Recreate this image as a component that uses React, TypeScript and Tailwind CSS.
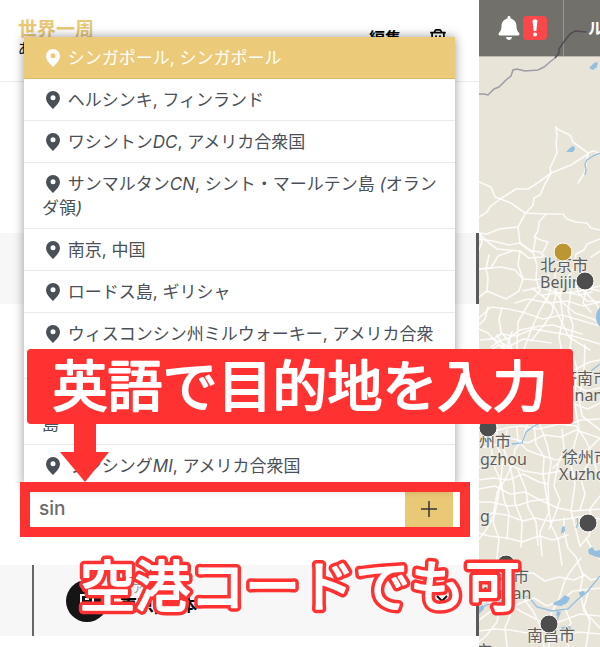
import React from "react";
import { FaBell, FaRegTrashAlt } from "react-icons/fa";

const destinations = [
  [{ text: "シンガポール, シンガポール" }],
  [{ text: "ヘルシンキ, フィンランド" }],
  [{ text: "ワシントン" }, { text: "DC", latin: true }, { text: ", アメリカ合衆国" }],
  [
    { text: "サンマルタン" },
    { text: "CN", latin: true },
    { text: ", シント・マールテン島 " },
    { text: "(", latin: true },
    { text: "オラン\nダ領" },
    { text: ")", latin: true },
  ],
  [{ text: "南京, 中国" }],
  [{ text: "ロードス島, ギリシャ" }],
  [{ text: "ウィスコンシン州ミルウォーキー, アメリカ合衆\n国" }],
  [{ text: "シンプソンベイ, シント・マールテン\n島" }],
  [{ text: "ランシング" }, { text: "MI", latin: true }, { text: ", アメリカ合衆国" }],
];

const roads = [
  "M77 127L78 136 77 143 78 153 71 168 72 173 66 184 61 195 55 198 54 205 46 214 39 227 41 243 53 252",
  "M77 127L80 130 91 135 94 142 109 153 114 151 121 153",
  "M109 154L92 165 72 173 60 182 49 189 37 189 31 193 21 199 11 207 8 212 0 217",
  "M0 182L12 187 16 197 32 203 46 213 67 214 84 214 88 219 97 222 108 223 112 228 121 230",
  "M109 154L107 165 106 172 99 183",
  "M67 214L60 222 59 231 55 237 62 240 69 242 64 252",
  "M39 227L20 229 8 234 0 233",
  "M0 239L14 241 30 245 41 243 52 251 61 252 70 261 84 263",
  "M0 233L10 243 18 249 41 251 50 258 64 257",
  "M0 232L3 242 0 250M0 269L12 268 19 256 33 251",
  "M41 251L39 265 44 279 40 291 27 299 8 291 0 297",
  "M10 255L7 269 9 277 8 292M0 269L22 267 36 270 44 279 58 280 70 275",
  "M57 237L54 252 58 265 57 279 61 291 50 303 39 322 38 349",
  "M121 239L108 244 105 250 97 254 95 268 86 282M121 251L112 257",
  "M44 291L61 287 78 293 96 292 121 286M36 303L49 299 70 303 88 301 104 306 121 302",
  "M0 318L12 307 29 309 43 312 64 319 83 315 121 326",
  "M23 308L20 319 22 332 31 343 36 362M9 307L6 319 0 325",
  "M73 281L70 295 61 310 52 330 45 349M84 281L81 297 84 318 80 337 85 363",
  "M76 274L77 294 73 313 65 325 52 341M92 290L89 310 94 325 91 349",
  "M66 282L75 288 83 302 96 313 114 319 121 323M53 288L66 298 76 308 90 337 111 350",
  "M61 287L71 283 89 285 103 287 121 291M64 295L85 292 100 295 113 292",
  "M96 283L100 294 108 301 121 302M101 275L105 291 117 303 121 311M108 286L104 303 112 312",
  "M0 340L14 339 22 334 37 336 54 329 78 333 94 336 121 344",
  "M12 347L20 341 30 338 41 330 61 326 74 325 103 334",
  "M0 329L9 333 18 343 28 353M5 355L18 346 31 346 44 339 72 343",
  "M33 332L29 344 27 356M18 335L26 349 36 350M12 338L25 344 42 355",
  "M92 348L98 369 95 400 100 428 91 460 96 484 92 511 101 546",
  "M106 345L105 371 100 398 103 416 121 430M95 370L111 362 121 360",
  "M94 384L107 391 121 388M95 404L109 409 121 403M88 425L102 420 121 419",
  "M0 440L13 432 31 427 43 426 60 429 80 424 97 426",
  "M55 424L57 444 65 457 64 474 68 499 72 525 79 539 83 565",
  "M61 425L68 444 72 462 69 484 70 512 61 532 63 556",
  "M38 427L39 441 48 450 61 455 77 460 94 456 121 463",
  "M48 425L44 440 36 449 34 463 27 478 18 493 14 517 7 530 0 539",
  "M0 447L12 447 31 438 49 443 65 435 82 437 97 430 121 438",
  "M0 467L17 463 28 464 45 471 64 474 83 471 96 474",
  "M8 425L12 444 14 463 22 482 25 500 30 513 28 539",
  "M18 427L18 446 24 459 22 478 19 498 14 522 20 539 17 565",
  "M28 430L25 450 32 470 35 486 36 503 43 521 42 547",
  "M0 480L14 478 29 480 44 474 60 482 69 484",
  "M0 489L16 486 31 494 46 492 61 500 79 508 94 511 121 509",
  "M0 519L13 513 28 515 44 521 56 518 70 521 88 519 105 516 121 519",
  "M0 502L12 502 29 506 40 505 52 501 68 499",
  "M0 533L10 536 28 538 43 542 60 536 74 540 89 535",
  "M39 470L47 490 49 507 57 522 59 545M79 464L75 486 81 500 76 515 70 529",
  "M93 456L110 449 121 438M97 426L106 439 113 453 118 472 121 481",
  "M83 429L85 448 80 462 74 468M105 450L110 463 101 476 106 494 101 510",
  "M101 546L110 536 113 522 111 509 121 496M107 538L114 551 121 559",
  "M85 518L85 532 89 548 97 557 104 575 101 592 105 611 121 628",
  "M102 558L94 568 86 580 80 599 72 614 70 647",
  "M103 573L112 580 121 578M106 575L95 580 80 577 66 581 54 573 37 574",
  "M0 573L8 580 20 588 29 603 43 612 61 621 80 622 101 614 121 616",
  "M30 575L36 592 33 611 26 628 28 647M13 590L21 604 18 622 7 636 0 642",
  "M0 620L12 611 29 609 44 602 55 598 68 606 83 600 94 591 121 588",
  "M0 631L16 629 31 630 48 633 62 630 81 637 99 632 121 634",
  "M44 598L54 611 61 625 65 647M86 608L92 623 84 636 90 647",
  "M109 593L105 607 111 622 107 647M0 604L8 601 18 606",
];

const markers = [
  { x: 84, y: 252, color: "#bd9634" },
  { x: 106, y: 281, color: "#4d4d4d" },
  { x: 9, y: 428, color: "#4d4d4d" },
  { x: 109, y: 523, color: "#4d4d4d" },
  { x: 27, y: 564, color: "#4d4d4d" },
  { x: 70, y: 624, color: "#4d4d4d" },
];

const labels = [
  { x: 61, y: 271, text: "北京市" },
  { x: 61, y: 288, text: "Beijin" },
  { x: -32, y: 342, text: "Taiyi" },
  { x: 82, y: 384, text: "济南市" },
  { x: 87, y: 401, text: "Jinan" },
  { x: -16, y: 447, text: "郑州市" },
  { x: -37, y: 465, text: "Zhengzhou" },
  { x: 83, y: 463, text: "徐州市" },
  { x: 80, y: 480, text: "Xuzhou" },
  { x: -57, y: 522, text: "Nanyang" },
  { x: 2, y: 582, text: "武汉市" },
  { x: -1, y: 599, text: "Wuhan" },
  { x: 48, y: 641, text: "南昌市" },
  { x: -35, y: 657, text: "长沙市" },
];

const PinIcon = () => (
  <svg viewBox="0 0 14 18" className="mr-[3px] ml-1 inline-block h-[18px] w-[14px] align-[-3px]">
    <path
      fill="currentColor"
      fillRule="evenodd"
      d="M7 0a7 7 0 0 0-7 7c0 4.4 4.5 8.300 7 11 2.500-2.700 7-6.600 7-11a7 7 0 0 0-7-7Zm0 4.200a2.500 2.500 0 1 1 0 5 2.500 2.500 0 0 1 0-5Z"
    />
  </svg>
);

const RouteMap = () => (
  <svg
    viewBox="0 0 121 647"
    preserveAspectRatio="xMinYMin slice"
    className="absolute inset-0 h-full w-full bg-[#e8e4d8]"
  >
    <g fill="none" stroke="#fff" strokeWidth="1.6" strokeLinejoin="round" strokeLinecap="round">
      {roads.map((road, index) => (
        <path key={index} d={road} strokeOpacity=".85" />
      ))}
    </g>
    <g fill="none" stroke="#94bfe0" strokeWidth="1.3">
      <path d="M121 153L114 156 108 160 106 164 107 170 106 175" />
      <path d="M33 444L43 443 47 432 55 426 61 423M112 371L121 364" />
      <path d="M0 611L7 605 18 603 35 595 50 597 58 607 73 611 89 609 98 600 108 592 121 576" />
      <path d="M98 518L99 524 97 528M86 529L84 533M79 613L79 618 76 623" />
    </g>
    <g fill="#94bfe0">
      <path d="M87 152L92 147 95 146 96 149 94 152ZM110 68L115 63 119 62 118 67 114 70Z" />
      <circle cx="131" cy="317" r="14" />
      <path d="M109 550L113 547 116 551 121 550V558L115 556 110 554ZM83 527L86 526 85 531 82 534Z" />
      <path d="M74 603L82 599 86 595 91 598 88 603 82 606 75 605ZM78 611L82 612 80 617 77 615ZM82 627L91 626 93 630 84 632Z" />
      <path d="M0 607L4 605 5 609 0 614ZM100 592L105 591 106 594 101 597Z" />
    </g>
    {labels.map((label) => (
      <text
        key={label.text}
        x={label.x}
        y={label.y}
        fontSize="16"
        fill="#5e5e5e"
        stroke="#efede5"
        strokeWidth="2"
        paintOrder="stroke"
        className="font-['Noto_Sans','Noto_Sans_CJK_SC',sans-serif]"
      >
        {label.text}
      </text>
    ))}
    {markers.map((marker, index) => (
      <circle
        key={index}
        cx={marker.x}
        cy={marker.y}
        r="9"
        fill={marker.color}
        stroke="#fff"
        strokeWidth="1"
      />
    ))}
  </svg>
);

const DestinationMenu = () => (
  <ul className="absolute bottom-full left-0 z-10 mb-[3px] w-full bg-white text-[17px] leading-6 text-[#495057] shadow-[0_0_10px_rgba(0,0,0,0.4)]">
    {destinations.map((parts, index) => (
      <li
        key={index}
        className={
          index === 0
            ? "border-b border-[#dfb966] bg-[#ebca7a] text-white"
            : "border-b border-[#e9e9e9]"
        }
      >
        <button
          type="button"
          className="block w-full pt-[9px] pr-2 pb-2 pl-[18px] text-left whitespace-pre"
        >
          <PinIcon />{" "}
          {parts.map((part, i) => (
            <span key={i} className={"latin" in part ? "italic" : ""}>
              {part.text}
            </span>
          ))}
        </button>
      </li>
    ))}
  </ul>
);

// Hand-lettered look: regular weight thickened with a round-joined stroke
const Lettering = ({ id, text, outline }: { id: string; text: string; outline?: string }) => (
  <svg
    viewBox="0 0 546 75"
    className="h-[75px] w-[546px] overflow-visible font-['Noto_Sans_CJK_JP',sans-serif]"
    strokeLinejoin="round"
    strokeLinecap="round"
    fill="#fff"
  >
    <defs>
      <text id={id} x="273" y="57" fontSize="55" fontWeight="400" textAnchor="middle">
        {text}
      </text>
    </defs>
    {outline && <use href={`#${id}`} stroke={outline} strokeWidth="9" />}
    <use href={`#${id}`} stroke="#fff" strokeWidth="2" />
  </svg>
);

const App: React.FC = () => {
  return (
    <div className="relative flex min-h-screen overflow-hidden bg-white font-['Inter','Noto_Sans_CJK_JP',sans-serif] text-black">
      <main className="w-[479px] flex-none">
        <header className="flex h-[82px] justify-between border-b border-[#ececec] pt-[18px] pr-8 pl-[18px]">
          <div>
            <h1 className="text-[19px] leading-6 font-bold text-[#e9c876]">世界一周</h1>
            <p className="text-sm leading-3">あと少し</p>
          </div>
          <div className="flex items-start gap-7 pt-2 font-bold">
            <button type="button">編集</button>
            <button type="button" aria-label="削除" className="pt-[3px]">
              <FaRegTrashAlt size={18} />
            </button>
          </div>
        </header>

        <div className="mt-[151px] h-[71px] border-r-[3px] border-[#5a5a5c] bg-[#f7f7f7]" />

        <form
          className="relative mt-[186px] mr-6 ml-6 flex h-[38px] bg-white"
          onSubmit={(e) => e.preventDefault()}
        >
          <DestinationMenu />
          <input
            type="text"
            aria-label="目的地"
            defaultValue="sin"
            className="min-w-0 flex-1 px-[15px] text-[19px] font-medium text-[#6c6c6c] outline-none"
          />
          <button
            type="button"
            aria-label="追加"
            className="mr-[2px] flex w-12 items-center justify-center bg-[#e9c876]"
          >
            <svg viewBox="0 0 16 16" className="h-4 w-4" stroke="#333" strokeWidth="1.5">
              <path d="M8 0V16M0 8H16" />
            </svg>
          </button>
        </form>

        <div className="mt-[37px] mb-[11px] flex h-[71px] border-r-[3px] border-[#5a5a5c] bg-[#f7f7f7]">
          <div className="ml-8 flex flex-1 items-center gap-3 border-l-2 border-[#666] pr-7 pl-8">
            <div className="flex h-[42px] w-[42px] items-center justify-center rounded-full bg-[#151515]">
              <svg viewBox="0 0 16 16" className="h-4 w-4" fill="none" stroke="#fff" strokeWidth="2">
                <path d="M2 15V2H14V15M6 6H10M6 10H10" />
              </svg>
            </div>
            <div className="flex-1 pb-1">
              <p className="text-xs leading-3 text-[#999]">エア</p>
              <p className="text-[17px] leading-5 font-bold">東京, 日本</p>
            </div>
            <svg viewBox="0 0 12 12" className="h-3 w-3" stroke="#111" strokeWidth="2">
              <path d="M1 1L11 11M1 11L11 1" />
            </svg>
          </div>
        </div>
      </main>

      <aside className="relative min-w-0 flex-1">
        <RouteMap />
        <nav className="relative flex h-[57px] overflow-hidden border-b border-[#bbb9b1] bg-[#71706a] text-white">
          <div className="flex w-[85px] flex-none items-center gap-[2px] border-r border-[#96958f] pl-[18px]">
            <FaBell size={24} className="flex-none" />
            <span className="flex h-6 w-6 flex-none items-center justify-center rounded-sm bg-[#fa474a]">
              <svg viewBox="0 0 6 18" className="h-[18px] w-[6px]" fill="#fff">
                <path d="M0.500 1.500Q3-1 5.500 1.500L4.300 12H1.700Z" />
                <circle cx="3" cy="15.500" r="2" />
              </svg>
            </span>
          </div>
          <a href="#" className="pl-6 text-base leading-[56px] font-bold whitespace-nowrap">
            ルート
          </a>
        </nav>
        <svg
          viewBox="0 0 121 100"
          className="absolute top-0 left-0 h-[100px] w-[121px]"
          fill="none"
          strokeWidth="1.500"
        >
          <path
            stroke="#a09ba8"
            d="M0 94L5 94 9 95 15 89 20 87 27 80 32 76 34 70 38 69 46 71 59 70 65 67 72 61 76 58"
          />
          <path stroke="#514c54" d="M76 58L80 53 80 49 84 43 91 34 96 31 108 32" />
        </svg>
      </aside>

      <div className="pointer-events-none absolute top-[482px] left-5 z-20 h-[55px] w-[450px] border-10 border-[#ff3131]" />
      <svg
        viewBox="0 0 50 60"
        className="absolute top-[422px] left-[60px] z-20 h-[60px] w-[50px]"
        fill="#ff3131"
      >
        <path d="M14 0H36V30H49L25 60 0 30H14Z" />
      </svg>
      <div className="absolute top-[349px] left-[27px] z-20 rounded-sm bg-[#ff3131]">
        <Lettering id="caption-city" text="英語で目的地を入力" />
      </div>
      <div className="absolute top-[549px] left-[27px] z-20">
        <Lettering id="caption-airport" text="空港コードでも可" outline="#ff3131" />
      </div>
    </div>
  );
};

export default App;
